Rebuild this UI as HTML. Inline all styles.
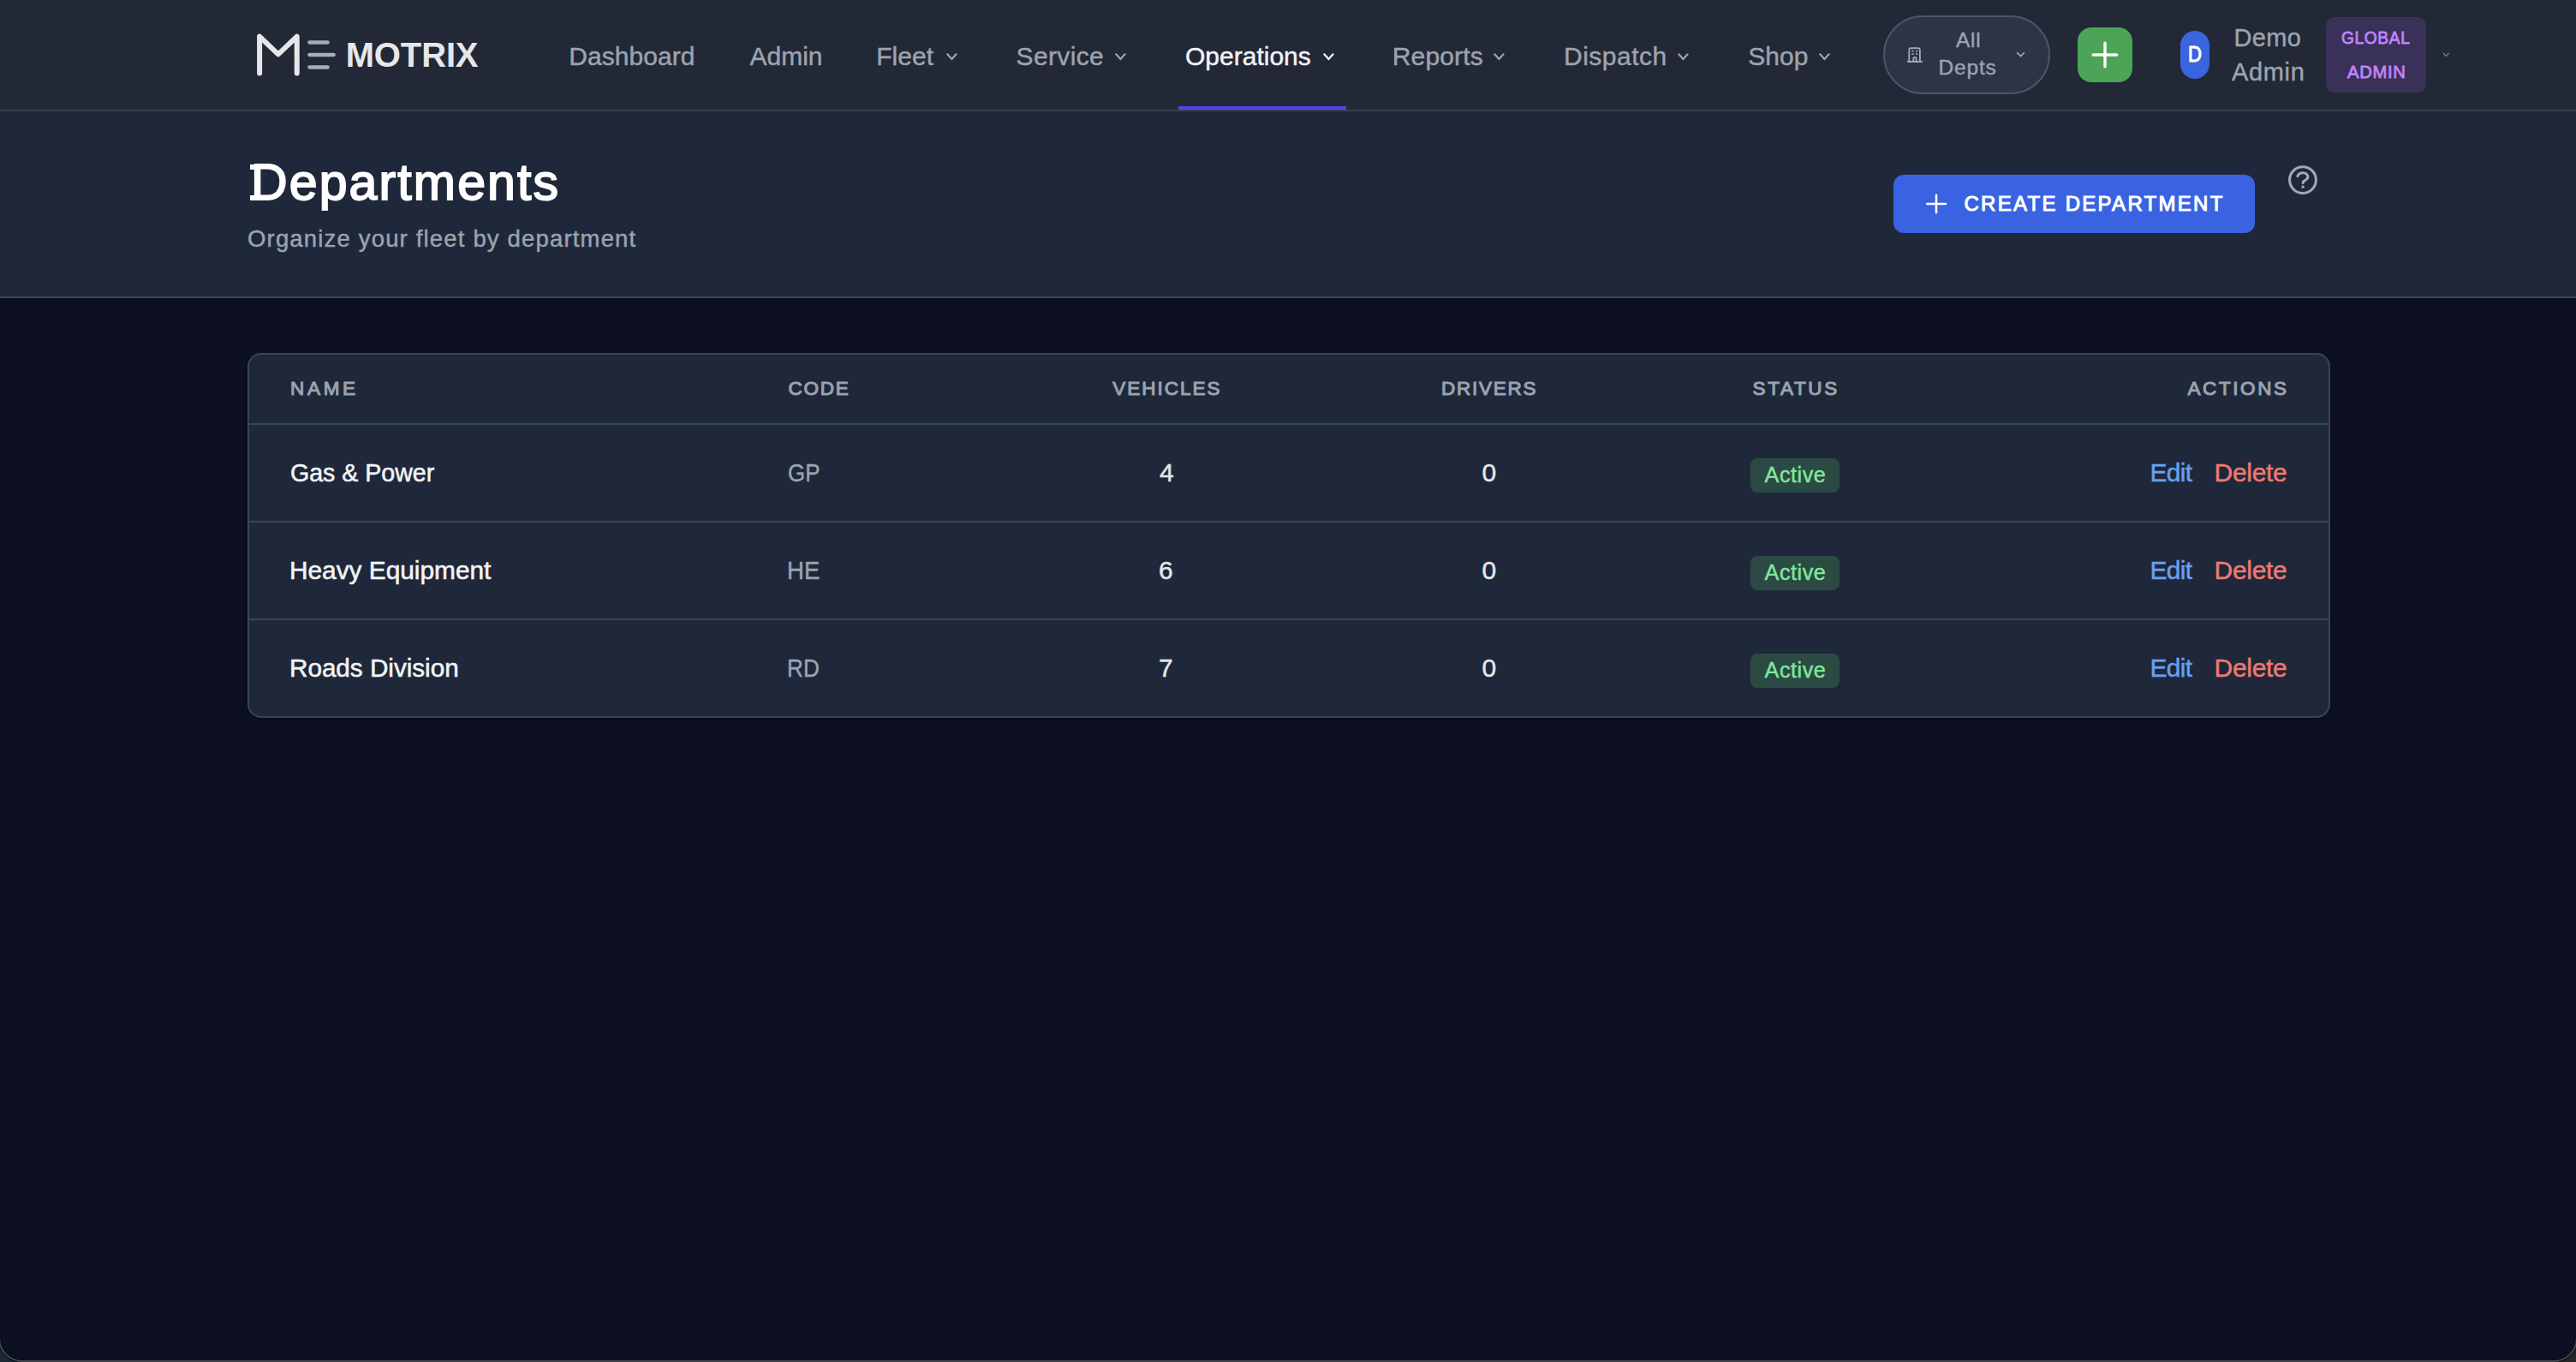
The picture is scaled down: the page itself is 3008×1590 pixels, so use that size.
<!DOCTYPE html>
<html><head><meta charset="utf-8"><title>Departments</title>
<style>
html,body{margin:0;padding:0;}
body{width:3008px;height:1590px;position:relative;overflow:hidden;background:#1a2a33;font-family:"Liberation Sans",sans-serif;}
.t{position:absolute;white-space:nowrap;line-height:1;}
.a{position:absolute;display:block;}
.b{position:absolute;box-sizing:border-box;}
@media (max-width:2000px){html{zoom:0.5;}}
</style></head><body>
<div class="b" style="left:2900px;top:1500px;width:108px;height:90px;background:#262626"></div>
<div class="b" style="left:-2px;top:-4px;width:3012px;height:1594px;border-radius:0 0 28px 28px;border:2px solid #44464f;background:#0c1021;box-shadow:0 0 0 1px #050608"></div>
<div class="b" style="left:0;top:0;width:3008px;height:130px;background:#222836;border-bottom:2px solid #3b4151"></div>
<svg class="a" style="left:296px;top:36px" width="110" height="56" viewBox="0 0 110 56">
<path d="M7.1 49.4 V6.6 L28.9 27.4 L50.7 6.6 V49.4" fill="none" stroke="#e5e7eb" stroke-width="6" stroke-linecap="round" stroke-linejoin="round"/>
<path d="M65.5 13.5 H86.5 M65.5 28 H93.5 M65.5 42.5 H86.5" fill="none" stroke="#a9adb5" stroke-width="4.6" stroke-linecap="round"/>
</svg>
<div class="t" style="left:403.70px;top:44.14px;font-size:40px;color:#e5e7eb;font-weight:700;letter-spacing:-0.14px;font-family:'Liberation Sans',sans-serif;">MOTRIX</div>
<div class="t" style="left:664.30px;top:50.61px;font-size:30px;color:#9ca3af;font-weight:400;letter-spacing:0.04px;font-family:'Liberation Sans',sans-serif;-webkit-text-stroke:0.45px #9ca3af;">Dashboard</div>
<div class="t" style="left:875.50px;top:50.61px;font-size:30px;color:#9ca3af;font-weight:400;letter-spacing:0.00px;font-family:'Liberation Sans',sans-serif;-webkit-text-stroke:0.45px #9ca3af;">Admin</div>
<div class="t" style="left:1023.20px;top:50.61px;font-size:30px;color:#9ca3af;font-weight:400;letter-spacing:0.05px;font-family:'Liberation Sans',sans-serif;-webkit-text-stroke:0.45px #9ca3af;">Fleet</div>
<svg class="a" style="left:1102.6px;top:59.8px" width="16.9" height="12.4" viewBox="0 0 16.9 12.4"><path d="M3.3000000000000003 3.3000000000000003 L8.45 9.1 L13.6 3.3000000000000003" fill="none" stroke="#9ca3af" stroke-width="2.2" stroke-linecap="round" stroke-linejoin="round"/></svg>
<div class="t" style="left:1186.50px;top:50.61px;font-size:30px;color:#9ca3af;font-weight:400;letter-spacing:0.37px;font-family:'Liberation Sans',sans-serif;-webkit-text-stroke:0.45px #9ca3af;">Service</div>
<svg class="a" style="left:1299.8px;top:59.8px" width="16.9" height="12.4" viewBox="0 0 16.9 12.4"><path d="M3.3000000000000003 3.3000000000000003 L8.45 9.1 L13.6 3.3000000000000003" fill="none" stroke="#9ca3af" stroke-width="2.2" stroke-linecap="round" stroke-linejoin="round"/></svg>
<div class="t" style="left:1384.00px;top:50.61px;font-size:30px;color:#f3f4f6;font-weight:400;letter-spacing:0.00px;font-family:'Liberation Sans',sans-serif;-webkit-text-stroke:0.45px #f3f4f6;">Operations</div>
<svg class="a" style="left:1543.3999999999999px;top:59.8px" width="16.9" height="12.4" viewBox="0 0 16.9 12.4"><path d="M3.3000000000000003 3.3000000000000003 L8.45 9.1 L13.6 3.3000000000000003" fill="none" stroke="#f3f4f6" stroke-width="2.2" stroke-linecap="round" stroke-linejoin="round"/></svg>
<div class="t" style="left:1625.70px;top:50.61px;font-size:30px;color:#9ca3af;font-weight:400;letter-spacing:0.17px;font-family:'Liberation Sans',sans-serif;-webkit-text-stroke:0.45px #9ca3af;">Reports</div>
<svg class="a" style="left:1742.3999999999999px;top:59.8px" width="16.9" height="12.4" viewBox="0 0 16.9 12.4"><path d="M3.3000000000000003 3.3000000000000003 L8.45 9.1 L13.6 3.3000000000000003" fill="none" stroke="#9ca3af" stroke-width="2.2" stroke-linecap="round" stroke-linejoin="round"/></svg>
<div class="t" style="left:1826.00px;top:50.61px;font-size:30px;color:#9ca3af;font-weight:400;letter-spacing:0.50px;font-family:'Liberation Sans',sans-serif;-webkit-text-stroke:0.45px #9ca3af;">Dispatch</div>
<svg class="a" style="left:1956.7px;top:59.8px" width="16.9" height="12.4" viewBox="0 0 16.9 12.4"><path d="M3.3000000000000003 3.3000000000000003 L8.45 9.1 L13.6 3.3000000000000003" fill="none" stroke="#9ca3af" stroke-width="2.2" stroke-linecap="round" stroke-linejoin="round"/></svg>
<div class="t" style="left:2041.30px;top:50.61px;font-size:30px;color:#9ca3af;font-weight:400;letter-spacing:0.00px;font-family:'Liberation Sans',sans-serif;-webkit-text-stroke:0.45px #9ca3af;">Shop</div>
<svg class="a" style="left:2122.2000000000003px;top:59.8px" width="16.9" height="12.4" viewBox="0 0 16.9 12.4"><path d="M3.3000000000000003 3.3000000000000003 L8.45 9.1 L13.6 3.3000000000000003" fill="none" stroke="#9ca3af" stroke-width="2.2" stroke-linecap="round" stroke-linejoin="round"/></svg>
<div class="b" style="left:1376px;top:124px;width:196px;height:4px;background:#4f46e5"></div>
<div class="b" style="left:2199px;top:18px;width:195px;height:92px;border-radius:46px;border:2px solid #4a5568;background:#2c3447"></div>
<svg class="a" style="left:2220px;top:48px" width="32" height="32" viewBox="0 0 32 32" fill="none" stroke="#a3a9b6" stroke-width="1.8" stroke-linecap="round" stroke-linejoin="round">
<path d="M7.8 24H24.1M9.3 24V10.4Q9.3 8.1 11.6 8.1H19.6Q21.9 8.1 21.9 10.4V24M14.3 24V20.7A1.68 1.68 0 0 1 17.66 20.7V24"/>
<path d="M12.3 11.5h2.4M16.9 11.5h2.4M12.3 15h2.4M16.9 15h2.4" stroke-width="1.6" stroke-linecap="butt"/></svg>
<div class="t" style="left:2284.00px;top:35.26px;font-size:24.5px;color:#9ca3af;font-weight:400;letter-spacing:0.75px;font-family:'Liberation Sans',sans-serif;-webkit-text-stroke:0.45px #9ca3af;">All</div>
<div class="t" style="left:2263.60px;top:67.26px;font-size:24.5px;color:#9ca3af;font-weight:400;letter-spacing:0.80px;font-family:'Liberation Sans',sans-serif;-webkit-text-stroke:0.45px #9ca3af;">Depts</div>
<svg class="a" style="left:2352.7999999999997px;top:59.2px" width="13.1" height="9.4" viewBox="0 0 13.1 9.4"><path d="M2.7 2.7 L6.55 6.7 L10.399999999999999 2.7" fill="none" stroke="#9ca3af" stroke-width="1.8" stroke-linecap="round" stroke-linejoin="round"/></svg>
<div class="b" style="left:2426px;top:32px;width:64px;height:64px;border-radius:16px;background:#4ca556"></div>
<svg class="a" style="left:2426px;top:32px" width="64" height="64" viewBox="0 0 64 64"><path d="M32 18.3V45.7M18.3 32H45.7" stroke="#fff" stroke-width="3.4" stroke-linecap="round"/></svg>
<div class="b" style="left:2546px;top:36px;width:34px;height:56px;border-radius:17px;background:#3a64e0"></div>
<div class="t" style="left:2554.62px;top:51.04px;font-size:25px;color:#ffffff;font-weight:400;letter-spacing:0.00px;font-family:'Liberation Sans',sans-serif;-webkit-text-stroke:1.0px #ffffff;transform:scaleX(0.8824);transform-origin:0 0;">D</div>
<div class="t" style="left:2608.60px;top:29.65px;font-size:29px;color:#9ca3af;font-weight:400;letter-spacing:0.33px;font-family:'Liberation Sans',sans-serif;-webkit-text-stroke:0.45px #9ca3af;">Demo</div>
<div class="t" style="left:2606.00px;top:69.65px;font-size:29px;color:#9ca3af;font-weight:400;letter-spacing:0.65px;font-family:'Liberation Sans',sans-serif;-webkit-text-stroke:0.45px #9ca3af;">Admin</div>
<div class="b" style="left:2716px;top:20px;width:117px;height:88px;border-radius:10px;background:#3a3159"></div>
<div class="t" style="left:2734.47px;top:33.65px;font-size:20.5px;color:#c084fc;font-weight:400;letter-spacing:0.70px;font-family:'Liberation Sans',sans-serif;-webkit-text-stroke:0.8px #c084fc;transform:scaleX(0.9325);transform-origin:0 0;">GLOBAL</div>
<div class="t" style="left:2741.30px;top:74.15px;font-size:20.5px;color:#c084fc;font-weight:400;letter-spacing:0.70px;font-family:'Liberation Sans',sans-serif;-webkit-text-stroke:0.8px #c084fc;transform:scaleX(0.9853);transform-origin:0 0;">ADMIN</div>
<svg class="a" style="left:2851.2px;top:60.1px" width="10.5" height="7.8" viewBox="0 0 10.5 7.8"><path d="M2.25 2.25 L5.25 5.55 L8.25 2.25" fill="none" stroke="#6b7280" stroke-width="1.5" stroke-linecap="round" stroke-linejoin="round"/></svg>
<div class="b" style="left:0;top:130px;width:3008px;height:218px;background:#1f283a;border-bottom:2px solid #394558"></div>
<div class="t" style="left:293.00px;top:184.36px;font-size:59px;color:#ffffff;font-weight:400;letter-spacing:2.13px;font-family:'Liberation Sans',sans-serif;-webkit-text-stroke:1.9px #ffffff;">Departments</div>
<div class="b" style="left:291.8px;top:192px;width:6px;height:6.2px;background:#fff"></div><div class="b" style="left:291.8px;top:227.9px;width:6px;height:6.3px;background:#fff"></div>
<div class="t" style="left:289.00px;top:264.72px;font-size:27.5px;color:#9ca3af;font-weight:400;letter-spacing:1.17px;font-family:'Liberation Sans',sans-serif;-webkit-text-stroke:0.45px #9ca3af;">Organize your fleet by department</div>
<div class="b" style="left:2211px;top:204px;width:422px;height:68px;border-radius:12px;background:#3a63e2"></div>
<svg class="a" style="left:2246px;top:225px" width="30" height="30" viewBox="0 0 30 30"><path d="M15 2.7V23.3M4.3 13H25.9" stroke="#fff" stroke-width="2.6" stroke-linecap="round"/></svg>
<div class="t" style="left:2293.50px;top:226.18px;font-size:24px;color:#ffffff;font-weight:400;letter-spacing:2.28px;font-family:'Liberation Sans',sans-serif;-webkit-text-stroke:1.0px #ffffff;">CREATE DEPARTMENT</div>
<svg class="a" style="left:2665px;top:186px" width="48" height="48" viewBox="0 0 48 48" fill="none" stroke="#a1a7b3" stroke-width="3.1" stroke-linecap="round" stroke-linejoin="round">
<circle cx="24" cy="24.1" r="15.4"/><path d="M17.9 19.7C18.8 17.1 21 15.7 24 15.7C27.5 15.7 29.9 17.9 29.9 20.6C29.9 23.9 25.6 24.4 24.3 26.5L24.2 27.6"/><circle cx="24.1" cy="32.3" r="1.75" fill="#a1a7b3" stroke="none"/></svg>
<div class="b" style="left:289px;top:412px;width:2432px;height:426px;border-radius:16px;border:2px solid #394558;background:#1f283a;overflow:hidden;box-shadow:0 1px 2px rgba(0,0,0,0.25)">
<div class="b" style="left:0;top:80px;width:100%;height:2px;background:#394558"></div>
<div class="b" style="left:0;top:194px;width:100%;height:2px;background:#394558"></div>
<div class="b" style="left:0;top:308px;width:100%;height:2px;background:#394558"></div>
</div>
<div class="t" style="left:339.10px;top:442.95px;font-size:22.5px;color:#9ca3af;font-weight:400;letter-spacing:3.67px;font-family:'Liberation Sans',sans-serif;-webkit-text-stroke:1.05px #9ca3af;">NAME</div>
<div class="t" style="left:920.40px;top:442.95px;font-size:22.5px;color:#9ca3af;font-weight:400;letter-spacing:1.77px;font-family:'Liberation Sans',sans-serif;-webkit-text-stroke:1.05px #9ca3af;">CODE</div>
<div class="t" style="left:1299.30px;top:442.95px;font-size:22.5px;color:#9ca3af;font-weight:400;letter-spacing:2.00px;font-family:'Liberation Sans',sans-serif;-webkit-text-stroke:1.05px #9ca3af;">VEHICLES</div>
<div class="t" style="left:1683.00px;top:442.95px;font-size:22.5px;color:#9ca3af;font-weight:400;letter-spacing:1.75px;font-family:'Liberation Sans',sans-serif;-webkit-text-stroke:1.05px #9ca3af;">DRIVERS</div>
<div class="t" style="left:2046.60px;top:442.95px;font-size:22.5px;color:#9ca3af;font-weight:400;letter-spacing:2.64px;font-family:'Liberation Sans',sans-serif;-webkit-text-stroke:1.05px #9ca3af;">STATUS</div>
<div class="t" style="left:2554.50px;top:442.95px;font-size:22.5px;color:#9ca3af;font-weight:400;letter-spacing:2.58px;font-family:'Liberation Sans',sans-serif;-webkit-text-stroke:1.05px #9ca3af;">ACTIONS</div>
<div class="t" style="left:339.33px;top:537.03px;font-size:29.5px;color:#f3f4f6;font-weight:400;letter-spacing:0.00px;font-family:'Liberation Sans',sans-serif;-webkit-text-stroke:0.55px #f3f4f6;transform:scaleX(0.9676);transform-origin:0 0;">Gas &amp; Power</div>
<div class="t" style="left:919.92px;top:537.03px;font-size:29.5px;color:#9ca3af;font-weight:400;letter-spacing:0.00px;font-family:'Liberation Sans',sans-serif;-webkit-text-stroke:0.45px #9ca3af;transform:scaleX(0.8780);transform-origin:0 0;">GP</div>
<div class="t" style="left:1354.00px;top:536.61px;font-size:30px;color:#e5e7eb;font-weight:400;letter-spacing:0.00px;font-family:'Liberation Sans',sans-serif;-webkit-text-stroke:0.45px #e5e7eb;">4</div>
<div class="t" style="left:1730.40px;top:536.61px;font-size:30px;color:#e5e7eb;font-weight:400;letter-spacing:0.00px;font-family:'Liberation Sans',sans-serif;-webkit-text-stroke:0.45px #e5e7eb;">0</div>
<div class="b" style="left:2044px;top:535px;width:104px;height:40px;border-radius:8px;background:#2c4a44"></div>
<div class="t" style="left:2060.60px;top:542.27px;font-size:25.2px;color:#80e89b;font-weight:400;letter-spacing:0.54px;font-family:'Liberation Sans',sans-serif;-webkit-text-stroke:0.45px #80e89b;">Active</div>
<div class="t" style="left:2510.50px;top:536.61px;font-size:30px;color:#68a0f2;font-weight:400;letter-spacing:-0.67px;font-family:'Liberation Sans',sans-serif;-webkit-text-stroke:0.45px #68a0f2;">Edit</div>
<div class="t" style="left:2585.60px;top:536.61px;font-size:30px;color:#ee7a70;font-weight:400;letter-spacing:-0.32px;font-family:'Liberation Sans',sans-serif;-webkit-text-stroke:0.45px #ee7a70;">Delete</div>
<div class="t" style="left:338.28px;top:651.03px;font-size:29.5px;color:#f3f4f6;font-weight:400;letter-spacing:0.00px;font-family:'Liberation Sans',sans-serif;-webkit-text-stroke:0.55px #f3f4f6;transform:scaleX(1.0108);transform-origin:0 0;">Heavy Equipment</div>
<div class="t" style="left:918.93px;top:651.03px;font-size:29.5px;color:#9ca3af;font-weight:400;letter-spacing:0.00px;font-family:'Liberation Sans',sans-serif;-webkit-text-stroke:0.45px #9ca3af;transform:scaleX(0.9342);transform-origin:0 0;">HE</div>
<div class="t" style="left:1353.00px;top:650.61px;font-size:30px;color:#e5e7eb;font-weight:400;letter-spacing:0.00px;font-family:'Liberation Sans',sans-serif;-webkit-text-stroke:0.45px #e5e7eb;">6</div>
<div class="t" style="left:1730.40px;top:650.61px;font-size:30px;color:#e5e7eb;font-weight:400;letter-spacing:0.00px;font-family:'Liberation Sans',sans-serif;-webkit-text-stroke:0.45px #e5e7eb;">0</div>
<div class="b" style="left:2044px;top:649px;width:104px;height:40px;border-radius:8px;background:#2c4a44"></div>
<div class="t" style="left:2060.60px;top:656.27px;font-size:25.2px;color:#80e89b;font-weight:400;letter-spacing:0.54px;font-family:'Liberation Sans',sans-serif;-webkit-text-stroke:0.45px #80e89b;">Active</div>
<div class="t" style="left:2510.50px;top:650.61px;font-size:30px;color:#68a0f2;font-weight:400;letter-spacing:-0.67px;font-family:'Liberation Sans',sans-serif;-webkit-text-stroke:0.45px #68a0f2;">Edit</div>
<div class="t" style="left:2585.60px;top:650.61px;font-size:30px;color:#ee7a70;font-weight:400;letter-spacing:-0.32px;font-family:'Liberation Sans',sans-serif;-webkit-text-stroke:0.45px #ee7a70;">Delete</div>
<div class="t" style="left:338.29px;top:765.03px;font-size:29.5px;color:#f3f4f6;font-weight:400;letter-spacing:0.00px;font-family:'Liberation Sans',sans-serif;-webkit-text-stroke:0.55px #f3f4f6;transform:scaleX(1.0047);transform-origin:0 0;">Roads Division</div>
<div class="t" style="left:919.02px;top:765.03px;font-size:29.5px;color:#9ca3af;font-weight:400;letter-spacing:0.00px;font-family:'Liberation Sans',sans-serif;-webkit-text-stroke:0.45px #9ca3af;transform:scaleX(0.8875);transform-origin:0 0;">RD</div>
<div class="t" style="left:1353.00px;top:764.61px;font-size:30px;color:#e5e7eb;font-weight:400;letter-spacing:0.00px;font-family:'Liberation Sans',sans-serif;-webkit-text-stroke:0.45px #e5e7eb;">7</div>
<div class="t" style="left:1730.40px;top:764.61px;font-size:30px;color:#e5e7eb;font-weight:400;letter-spacing:0.00px;font-family:'Liberation Sans',sans-serif;-webkit-text-stroke:0.45px #e5e7eb;">0</div>
<div class="b" style="left:2044px;top:763px;width:104px;height:40px;border-radius:8px;background:#2c4a44"></div>
<div class="t" style="left:2060.60px;top:770.27px;font-size:25.2px;color:#80e89b;font-weight:400;letter-spacing:0.54px;font-family:'Liberation Sans',sans-serif;-webkit-text-stroke:0.45px #80e89b;">Active</div>
<div class="t" style="left:2510.50px;top:764.61px;font-size:30px;color:#68a0f2;font-weight:400;letter-spacing:-0.67px;font-family:'Liberation Sans',sans-serif;-webkit-text-stroke:0.45px #68a0f2;">Edit</div>
<div class="t" style="left:2585.60px;top:764.61px;font-size:30px;color:#ee7a70;font-weight:400;letter-spacing:-0.32px;font-family:'Liberation Sans',sans-serif;-webkit-text-stroke:0.45px #ee7a70;">Delete</div>
</body></html>
